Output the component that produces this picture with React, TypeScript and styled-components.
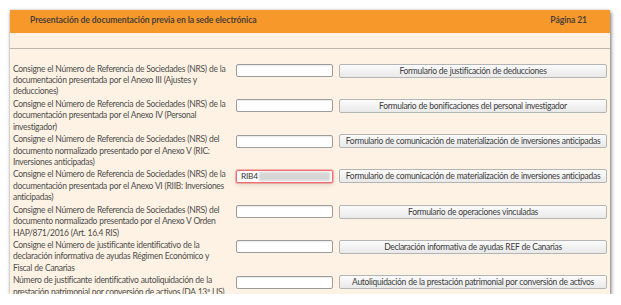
import React from "react";
import styled, { createGlobalStyle } from "styled-components";

const Global = createGlobalStyle`
  html, body { margin: 0; padding: 0; background: #ffffff; }
  body { font-family: "Lato", "Open Sans", sans-serif; }
`;

const Page = styled.div`
  padding: 10px 0 0 10px;
`;

const Panel = styled.div`
  width: 600px;
  height: 284px;
  overflow: hidden;
  background: #fdf2e4;
  box-shadow: 1px 2px 4px rgba(0, 0, 0, 0.55), 0 0 2px rgba(0, 0, 0, 0.15);
  display: flex;
  flex-direction: column;
`;

const Header = styled.div`
  box-sizing: border-box;
  height: 23px;
  flex: none;
  background: #f7982b;
  display: flex;
  align-items: center;
  justify-content: space-between;
  padding: 0 23px 3px 20px;
  font-size: 8.6px;
  letter-spacing: -0.1px;
  font-weight: 700;
  color: #4b4138;
`;

const Band = styled.div`
  height: 15px;
  flex: none;
  background: #fdf1e3;
  border-bottom: 1px solid #bdb7ae;
`;

const Content = styled.div`
  padding: 14px 3px 0 3px;
  display: flex;
  flex-direction: column;
`;

const Row = styled.div`
  display: grid;
  grid-template-columns: 217px 97px 268px;
  column-gap: 6px;
  align-items: start;
  height: 35.3px;
`;

const Label = styled.div`
  font-size: 8.5px;
  letter-spacing: -0.3px;
  word-spacing: 0.3px;
  line-height: 11.4px;
  margin-top: 0.5px;
  color: #4d4d4d;
`;

const Input = styled.div<{ $error?: boolean }>`
  box-sizing: border-box;
  height: 13px;
  margin-top: 1px;
  background: #ffffff;
  border: 1px solid ${(p) => (p.$error ? "#ee6f72" : "#9c9c9c")};
  border-radius: 2px;
  box-shadow: ${(p) =>
    p.$error ? "0 0 0 1px rgba(238,111,114,0.45), 0 2px 5px rgba(0,0,0,0.12)" : "inset 0 1px 1px rgba(0,0,0,0.08)"};
  display: flex;
  align-items: center;
  padding-left: 4px;
  font-size: 8.3px;
  letter-spacing: -0.2px;
  color: #333;
  overflow: hidden;
`;

const Redacted = styled.span`
  flex: 1;
  height: 9px;
  margin: 0 2px 0 1px;
  background: #d6d6d6;
  filter: blur(1px);
`;

const Button = styled.div`
  box-sizing: border-box;
  height: 14px;
  margin-top: 0.5px;
  border: 1px solid #b4b4b4;
  border-radius: 2px;
  background: linear-gradient(#fbfbfb, #e9e9e9);
  display: flex;
  align-items: center;
  justify-content: center;
  font-size: 8.5px;
  letter-spacing: -0.3px;
  word-spacing: 0.3px;
  color: #3d3d3d;
  white-space: nowrap;
  overflow: hidden;
`;

type Item = { label: string; button: string; value?: string };

const items: Item[] = [
  {
    label:
      "Consigne el Número de Referencia de Sociedades (NRS) de la documentación presentada por el Anexo III (Ajustes y deducciones)",
    button: "Formulario de justificación de deducciones",
  },
  {
    label:
      "Consigne el Número de Referencia de Sociedades (NRS) de la documentación presentada por el Anexo IV (Personal investigador)",
    button: "Formulario de bonificaciones del personal investigador",
  },
  {
    label:
      "Consigne el Número de Referencia de Sociedades (NRS) del documento normalizado presentado por el Anexo V (RIC: Inversiones anticipadas)",
    button: "Formulario de comunicación de materialización de inversiones anticipadas",
  },
  {
    label:
      "Consigne el Número de Referencia de Sociedades (NRS) de la documentación presentada por el Anexo VI (RIIB: Inversiones anticipadas)",
    button: "Formulario de comunicación de materialización de inversiones anticipadas",
    value: "RIB4",
  },
  {
    label:
      "Consigne el Número de Referencia de Sociedades (NRS) del documento normalizado presentado por el Anexo V Orden HAP/871/2016 (Art. 16.4 RIS)",
    button: "Formulario de operaciones vinculadas",
  },
  {
    label:
      "Consigne el Número de justificante identificativo de la declaración informativa de ayudas Régimen Económico y Fiscal de Canarias",
    button: "Declaración informativa de ayudas REF de Canarias",
  },
  {
    label:
      "Número de justificante identificativo autoliquidación de la prestación patrimonial por conversión de activos (DA 13ª LIS)",
    button: "Autoliquidación de la prestación patrimonial por conversión de activos",
  },
];

export default function App() {
  return (
    <>
      <Global />
      <Page>
        <Panel>
          <Header>
            <span>Presentación de documentación previa en la sede electrónica</span>
            <span>Página 21</span>
          </Header>
          <Band />
          <Content>
            {items.map((it, i) => (
              <Row key={i}>
                <Label>{it.label}</Label>
                <Input $error={!!it.value}>
                  {it.value && (
                    <>
                      <span>{it.value}</span>
                      <Redacted />
                    </>
                  )}
                </Input>
                <Button>{it.button}</Button>
              </Row>
            ))}
          </Content>
        </Panel>
      </Page>
    </>
  );
}
